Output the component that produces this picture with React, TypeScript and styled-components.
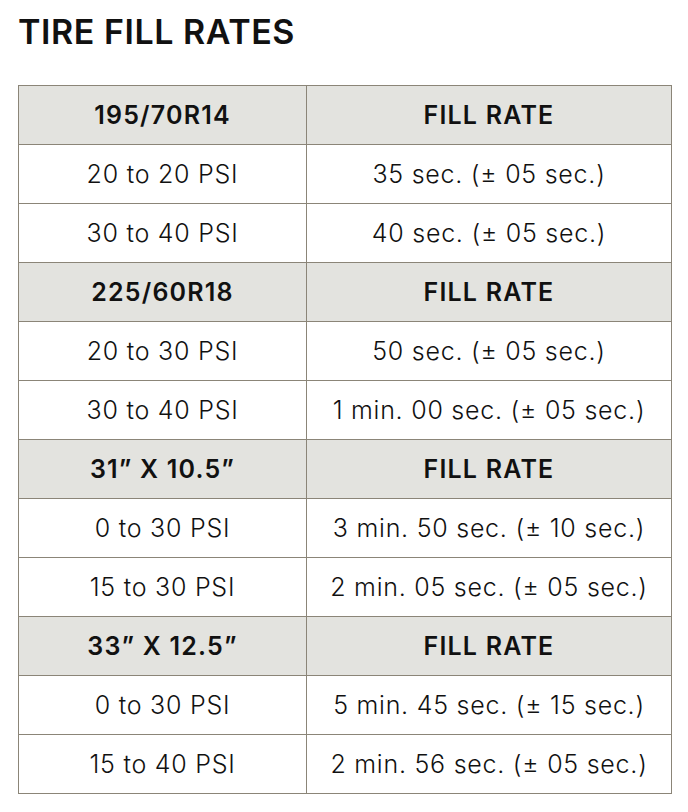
import React from "react";
import styled, { createGlobalStyle } from "styled-components";

const Global = createGlobalStyle`
  html, body { margin: 0; padding: 0; background: #ffffff; }
  body { font-family: Inter, "Liberation Sans", sans-serif; color: #111111; }
`;

const Page = styled.div`
  padding: 9px 18px 0 18px;
  width: 652px;
`;

const Title = styled.h1`
  margin: 0 0 30px 0;
  font-size: 34px;
  line-height: 46px;
  font-weight: 600;
  letter-spacing: 0.55px;
  color: #111111;
`;

const Table = styled.table`
  width: 653px;
  border-collapse: collapse;
  table-layout: fixed;
`;

const Cell = styled.td<{ $head?: boolean }>`
  height: 58px;
  padding: 0;
  border: 1px solid #8b8578;
  text-align: center;
  vertical-align: middle;
  font-size: 25px;
  letter-spacing: ${(p) => (p.$head ? "1.2px" : "0.75px")};
  font-weight: ${(p) => (p.$head ? 600 : 300)};
  background: ${(p) => (p.$head ? "#e3e3df" : "#ffffff")};
  color: #111111;
`;

const groups = [
  { size: "195/70R14", rows: [["20 to 20 PSI", "35 sec. (± 05 sec.)"], ["30 to 40 PSI", "40 sec. (± 05 sec.)"]] },
  { size: "225/60R18", rows: [["20 to 30 PSI", "50 sec. (± 05 sec.)"], ["30 to 40 PSI", "1 min. 00 sec. (± 05 sec.)"]] },
  { size: "31” X 10.5”", rows: [["0 to 30 PSI", "3 min. 50 sec. (± 10 sec.)"], ["15 to 30 PSI", "2 min. 05 sec. (± 05 sec.)"]] },
  { size: "33” X 12.5”", rows: [["0 to 30 PSI", "5 min. 45 sec. (± 15 sec.)"], ["15 to 40 PSI", "2 min. 56 sec. (± 05 sec.)"]] },
];

export default function App() {
  return (
    <Page>
      <Global />
      <Title>TIRE FILL RATES</Title>
      <Table>
        <colgroup>
          <col style={{ width: 288 }} />
          <col style={{ width: 365 }} />
        </colgroup>
        <tbody>
          {groups.map((g) => (
            <React.Fragment key={g.size}>
              <tr>
                <Cell $head>{g.size}</Cell>
                <Cell $head>FILL RATE</Cell>
              </tr>
              {g.rows.map((r, i) => (
                <tr key={i}>
                  <Cell>{r[0]}</Cell>
                  <Cell>{r[1]}</Cell>
                </tr>
              ))}
            </React.Fragment>
          ))}
        </tbody>
      </Table>
    </Page>
  );
}
